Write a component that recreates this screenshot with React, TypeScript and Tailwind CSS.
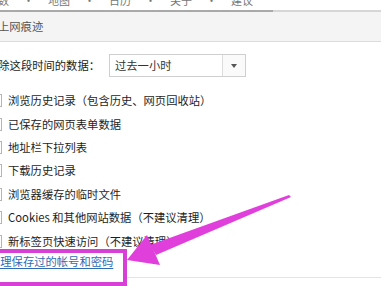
const font = { fontFamily: '"Noto Sans CJK SC", "Noto Sans", sans-serif' };

const items = [
  "浏览历史记录（包含历史、网页回收站）",
  "已保存的网页表单数据",
  "地址栏下拉列表",
  "下载历史记录",
  "浏览器缓存的临时文件",
  "Cookies 和其他网站数据（不建议清理）",
  "新标签页快速访问（不建议清理）",
];

function Arrow() {
  // annotation arrow pointing at the link
  return (
    <svg className="absolute left-0 top-0 pointer-events-none" width="381" height="286" viewBox="0 0 381 286">
      <polygon points="289,195 291,197 156,255 150,245" fill="#e03fdc" />
      <polygon points="127,260 147,235 160,265" fill="#e03fdc" />
    </svg>
  );
}

export default function App() {
  return (
    <div className="relative w-[381px] h-[286px] overflow-hidden bg-white text-[#333]" style={font}>
      <div className="h-[10px] overflow-hidden bg-white">
        <div className="-mt-[7px] flex gap-[14px] text-[11px] leading-[14px] text-[#777] -ml-[2px]">
          <span>数</span>
          <span>·</span>
          <span>地图</span>
          <span>·</span>
          <span>日历</span>
          <span>·</span>
          <span>关于</span>
          <span>·</span>
          <span>建议</span>
        </div>
      </div>
      <div className="flex h-[2px]">
        <div className="w-[273px] bg-[#a9a9a9]" />
        <div className="flex-1 bg-[#d6d6d6]" />
      </div>
      <div className="h-[30px] bg-[#f4f4f4] border-b border-[#dcdcdc] flex items-center">
        <span className="-ml-[2px] text-[11.3px] text-[#555]">上网痕迹</span>
      </div>

      <div className="flex items-center mt-[12px] h-[23px]">
        <span className="-ml-[13px] w-[122px] text-[11.3px] text-[#222]">清除这段时间的数据：</span>
        <div className="w-[137px] h-[23px] border border-[#cfcfcf] flex">
          <span className="flex-1 pl-[5px] text-[11.3px] leading-[21px] text-[#333]">过去一小时</span>
          <span className="w-[23px] border-l border-[#dcdcdc] bg-[#fafafa] flex items-center justify-center">
            <span className="w-0 h-0 border-l-[3.5px] border-r-[3.5px] border-t-[4px] border-l-transparent border-r-transparent border-t-[#555]" />
          </span>
        </div>
      </div>

      <div className="mt-[12px] flex flex-col">
        {items.map((t) => (
          <div key={t} className="h-[23.4px] flex items-center">
            <span className="-ml-[11px] w-[13px] h-[13px] border border-[#b5b5b5] bg-white shrink-0" />
            <span className="ml-[6px] text-[11.3px] text-[#1e1e1e] whitespace-nowrap">{t}</span>
          </div>
        ))}
      </div>

      <div className="h-[18px] flex items-center">
        <span className="-ml-[11px] text-[11.3px] text-[#2f6cb5] underline underline-offset-2">清理保存过的帐号和密码</span>
      </div>
      <div className="ml-[127px] mt-[6px] h-px bg-[#e4e4e4]" />

      <div className="absolute left-[-6px] top-[249px] w-[133px] h-[37px] border-4 border-[#d83fd6]" />
      <Arrow />
    </div>
  );
}
